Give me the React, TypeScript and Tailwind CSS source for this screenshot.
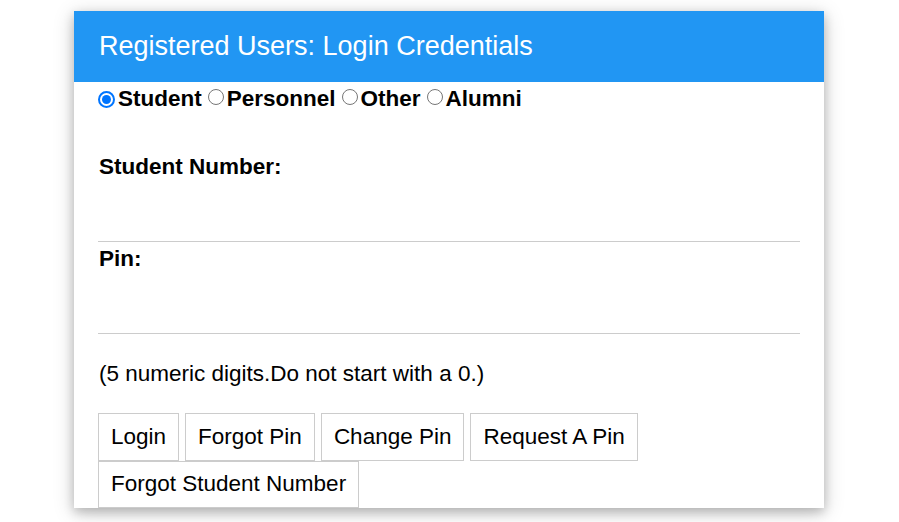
import React, { useState } from "react";

const roles = ["Student", "Personnel", "Other", "Alumni"];
const actions = ["Login", "Forgot Pin", "Change Pin", "Request A Pin", "Forgot Student Number"];

export default function App() {
  const [role, setRole] = useState("Student");

  return (
    <div className="min-h-screen bg-white pt-[11px] font-['Liberation_Sans',Arial,sans-serif] text-black">
      <div className="ml-[74px] w-[750px] bg-white shadow-[0_4px_10px_0_rgba(0,0,0,0.2),0_4px_20px_0_rgba(0,0,0,0.19)]">
        <header className="flex h-[71px] items-center bg-[#2196f3] pl-[25px] pr-6 text-[27px] text-white">
          Registered Users: Login Credentials
        </header>

        <form className="px-6 text-[22.5px] leading-[26px]" onSubmit={(e) => e.preventDefault()}>
          <div className="flex items-center gap-x-[6px] pt-[4px] font-bold">
            {roles.map((r) => (
              <label key={r} className="inline-flex cursor-pointer items-center">
                <input
                  type="radio"
                  name="role"
                  checked={role === r}
                  onChange={() => setRole(r)}
                  className="sr-only"
                />
                {role === r ? (
                  <span className="mr-[3px] flex h-[17px] w-[17px] shrink-0 items-center justify-center rounded-full border-2 border-[#0075ff] bg-white">
                    <span className="h-[9px] w-[9px] rounded-full bg-[#0075ff]" />
                  </span>
                ) : (
                  <span className="mr-[3px] -mt-[4px] h-[16px] w-[16px] shrink-0 rounded-full border border-[#767676] bg-white" />
                )}
                {r}
              </label>
            ))}
          </div>

          <label className="mt-[41.5px] block pl-px font-bold">Student Number:</label>
          <input
            type="text"
            className="block h-[62px] w-full border-0 border-b border-[#ccc] px-2 outline-none"
          />

          <label className="mt-[4px] block pl-px font-bold">Pin:</label>
          <input
            type="password"
            className="block h-[62px] w-full border-0 border-b border-[#ccc] px-2 outline-none"
          />

          <p className="mt-[27px] pl-px">(5 numeric digits.Do not start with a 0.)</p>

          <div className="mt-[26.5px] flex flex-wrap gap-x-[6px]">
            {actions.map((label) => (
              <button
                key={label}
                type="button"
                className="flex h-[47.5px] items-center border border-[#ccc] bg-white px-3 hover:bg-gray-100"
              >
                {label}
              </button>
            ))}
          </div>
        </form>
      </div>
    </div>
  );
}
